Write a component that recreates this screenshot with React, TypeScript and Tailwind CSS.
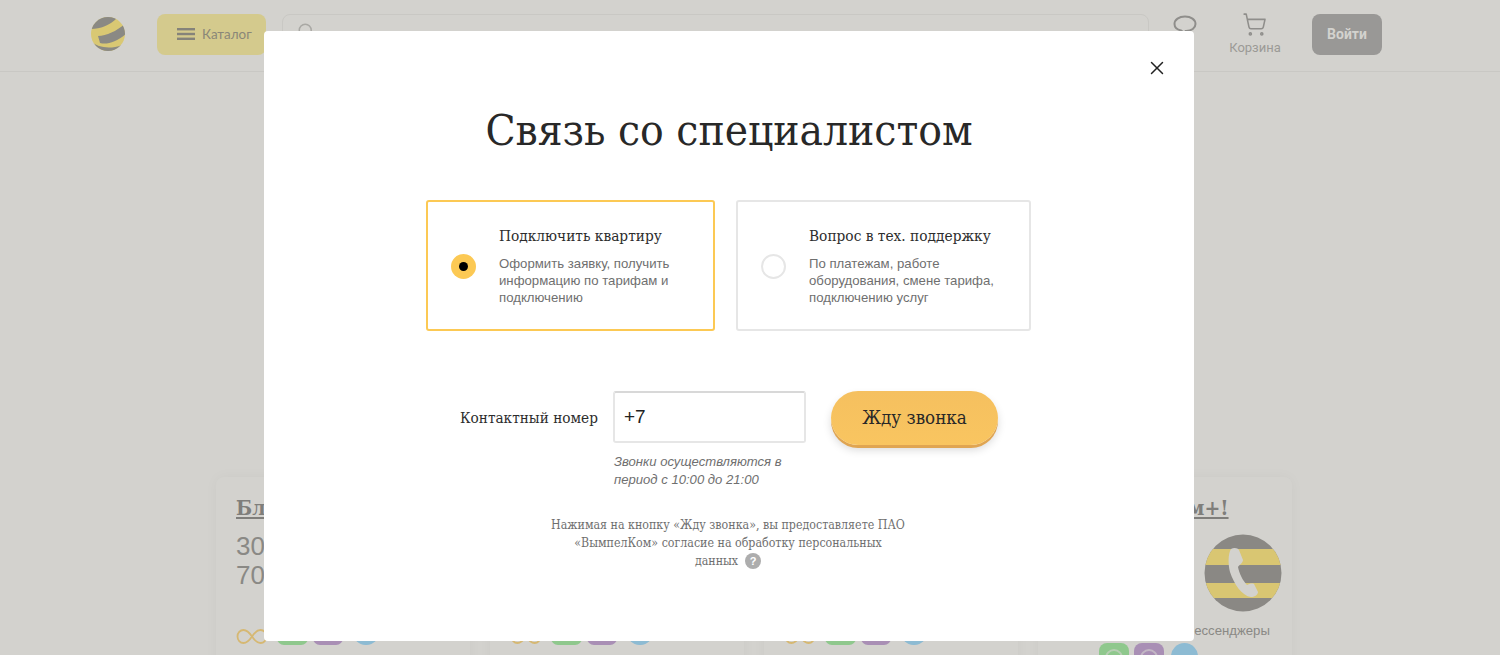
import React from "react";
import { Search, ShoppingCart, X } from "lucide-react";

const serif = "font-['DejaVu_Serif','Liberation_Serif',serif] [font-stretch:condensed]";
const sans = "font-['Liberation_Sans',Arial,sans-serif]";

const Ball = () => (
  <svg width="36" height="36" viewBox="0 0 36 36">
    <defs>
      <clipPath id="ball">
        <circle cx="18" cy="18" r="17" />
      </clipPath>
    </defs>
    <g clipPath="url(#ball)">
      <rect width="36" height="36" fill="#d9c873" />
      <path d="M0 13C10 13 19 10 27 2L14 -2L0 2Z" fill="#8a8984" />
      <path d="M8 20C17 20 27 15 36 7L37 17C28 25 18 29 10 27Z" fill="#8a8984" />
      <path d="M0 25C7 31 19 34 32 29L28 38L2 38Z" fill="#8a8984" />
    </g>
  </svg>
);

const PhoneBadge = () => (
  <svg width="78" height="78" viewBox="0 0 78 78">
    <defs>
      <clipPath id="badge">
        <circle cx="39" cy="39" r="38.5" />
      </clipPath>
    </defs>
    <g clipPath="url(#badge)">
      <rect width="78" height="78" fill="#8a8884" />
      <rect y="15" width="78" height="16" fill="#d9c672" />
      <rect y="49" width="78" height="15" fill="#d9c672" />
    </g>
    <path
      d="M27 15C30 13 34 14 35 16L39 26C39 29 35 31 34 33C35 39 39 47 43 51C45 50 48 49 50 50L54 58C54 61 50 63 47 63C38 62 30 50 26 38C24 30 24 20 27 15Z"
      fill="#d3d2ce"
    />
  </svg>
);

const Infinity = () => (
  <svg width="32" height="17" viewBox="0 0 32 17" className="shrink-0">
    <path
      d="M16 8.5C13 4 10.5 2 7.5 2C4 2 1.5 5 1.5 8.5C1.5 12 4 15 7.5 15C10.5 15 13 13 16 8.5C19 4 21.5 2 24.5 2C28 2 30.5 5 30.5 8.5C30.5 12 28 15 24.5 15C21.5 15 19 13 16 8.5Z"
      fill="none"
      stroke="#d6b872"
      strokeWidth="1.8"
    />
  </svg>
);

const Pills = () => (
  <div className="flex h-[17px] items-start">
    <Infinity />
    <div className="ml-[9px] h-[17px] w-[31px] rounded-b-[7px] bg-[#8fc88d]" />
    <div className="ml-[5px] h-[17px] w-[30px] rounded-b-[7px] bg-[#a98fb5]" />
    <div className="ml-[10px] h-[25px] w-[26px] -translate-y-[8px] rounded-full bg-[#8dbbd3]" />
  </div>
);

const Messenger = ({ color }: { color: string }) => (
  <div className={`flex h-[30px] w-[30px] items-center justify-center rounded-[8px] ${color}`}>
    <div className="h-[18px] w-[18px] rounded-full border-2 border-[#d3d2ce]/60" />
  </div>
);

const Option = ({
  active,
  title,
  lines,
  className,
}: {
  active?: boolean;
  title: string;
  lines: string[];
  className: string;
}) => (
  <div
    className={`flex h-[131px] items-center rounded-[3px] border-2 pl-[23px] ${
      active ? "border-[#fcc954]" : "border-[#e6e6e6]"
    } ${className}`}
  >
    {active ? (
      <div className="mt-[2px] flex h-[25px] w-[25px] items-center justify-center rounded-full bg-[#fcc954]">
        <div className="h-[9px] w-[9px] rounded-full bg-black" />
      </div>
    ) : (
      <div className="mt-[2px] h-[25px] w-[25px] rounded-full border-2 border-[#e6e6e6]" />
    )}
    <div className="ml-[23px]">
      <div className={`${serif} pt-[1px] text-[15.3px] leading-[20px] text-[#2c2c2c]`}>{title}</div>
      <div className={`${sans} mt-[9px] text-[13.2px] leading-[17px] text-[#6f6f6f]`}>
        {lines.map((l) => (
          <div key={l}>{l}</div>
        ))}
      </div>
    </div>
  </div>
);

const cardClass = "h-[200px] w-[254px] rounded-t-[8px] bg-[#d3d2ce] shadow-[0_0_14px_rgba(0,0,0,0.035)]";

const Background = () => (
  <div className="h-[655px] w-[1500px] overflow-hidden bg-[#d3d2ce]">
    <header className="flex h-[72px] items-start border-b border-[#c9c8c4] pl-[90px] pt-[14px]">
      <div className="mt-[2px]">
        <Ball />
      </div>
      <div className="ml-[31px] flex h-[41px] w-[109px] items-center rounded-[8px] bg-[#d4ca8d] pb-[1px] pl-[20px] font-['Lato',sans-serif] text-[13.4px] text-[#8a8778]">
        <svg width="18" height="12" viewBox="0 0 18 12" className="mr-[7px]">
          <rect width="18" height="2.4" fill="#85837a" />
          <rect y="4.8" width="18" height="2.4" fill="#85837a" />
          <rect y="9.6" width="18" height="2.4" fill="#85837a" />
        </svg>
        Каталог
      </div>
      <div className="ml-[16px] flex h-[33px] w-[867px] items-center rounded-[8px] border border-[#c9c8c4] pl-[14px]">
        <Search size={18} className="text-[#a9a8a4]" />
      </div>
      <svg width="24" height="24" viewBox="0 0 24 24" className="ml-[24px] mt-[1px]">
        <path
          d="M12 1.5C18 1.5 22.5 4.5 22.5 9C22.5 13 18.5 16 13 16L15 21L8 15.5C4 14.5 1.5 12 1.5 9C1.5 4.5 6 1.5 12 1.5Z"
          fill="none"
          stroke="#8f8e8b"
          strokeWidth="2"
        />
      </svg>
      <div className="ml-[28px] -mt-[2px] flex w-[60px] flex-col items-center font-['Roboto',sans-serif] text-[13px] text-[#9b9a96]">
        <ShoppingCart size={25} className="-translate-x-[1px] text-[#8f8e8b]" strokeWidth={1.5} />
        <span className="mt-[1px]">Корзина</span>
      </div>
      <div className="ml-[27px] flex h-[41px] w-[70px] items-center justify-center rounded-[8px] bg-[#999896] font-['Roboto',sans-serif] text-[14px] font-bold text-[#d3d2ce]">
        Войти
      </div>
    </header>

    <main className="mt-[405px] flex gap-[20px] pl-[216px]">
      <div className={`${cardClass} pl-[20px] pt-[17px]`}>
        <div className={`${serif} text-[21px] font-bold leading-[28px] text-[#7f7e7b] underline`}>Бл</div>
        <div className={`${sans} mt-[10px] text-[26px] leading-[29px] text-[#8a8985]`}>
          30
          <br />
          70
        </div>
        <div className="mt-[38px]">
          <Pills />
        </div>
      </div>
      <div className={`${cardClass} pl-[20px] pt-[151px]`}>
        <Pills />
      </div>
      <div className={`${cardClass} pl-[20px] pt-[151px]`}>
        <Pills />
      </div>
      <div className={`${cardClass} pl-[61px] pt-[17px]`}>
        <div className={`${serif} ml-[89px] text-[21px] font-bold leading-[28px] text-[#7f7e7b] underline`}>м+!</div>
        <div className="ml-[105px] mt-[12px] h-[78px]">
          <PhoneBadge />
        </div>
        <div className={`${sans} ml-[84px] mt-[11px] text-[13.2px] leading-[16px] text-[#8a8985]`}>Мессенджеры</div>
        <div className="mt-[4px] flex gap-[5px]">
          <Messenger color="bg-[#8fc88d]" />
          <Messenger color="bg-[#a98fb5]" />
          <div className="ml-[2px] h-[30px] w-[27px] rounded-full bg-[#8dbbd3]" />
        </div>
      </div>
    </main>
  </div>
);

export default function App() {
  return (
    <div className="relative h-[655px] w-[1500px] overflow-hidden">
      <Background />
      <div className="absolute left-[264px] top-[31px] h-[610px] w-[930px] rounded-[4px] bg-white">
        <X size={22} strokeWidth={1.6} className="absolute right-[26px] top-[26px] text-[#222]" />
        <h1 className={`${serif} pt-[70px] text-center text-[43.8px] font-normal leading-[58px] text-[#282828]`}>
          Связь со специалистом
        </h1>
        <div className="mt-[41px] flex pl-[162px]">
          <Option
            active
            className="w-[289px]"
            title="Подключить квартиру"
            lines={["Оформить заявку, получить", "информацию по тарифам и", "подключению"]}
          />
          <Option
            className="ml-[21px] w-[295px]"
            title="Вопрос в тех. поддержку"
            lines={["По платежам, работе", "оборудования, смене тарифа,", "подключению услуг"]}
          />
        </div>
        <div className="mt-[60px] flex items-start pl-[196px]">
          <label className={`${serif} w-[153px] pt-[16px] text-[15.2px] leading-[22px] text-[#2c2c2c]`}>Контактный номер</label>
          <div>
            <div className={`${sans} flex h-[52px] w-[193px] items-center rounded-[3px] border-2 border-[#e6e6e6] border-t-[#d8d8d8] pl-[9px] text-[19px] text-[#222]`}>
              +7
            </div>
            <p className={`${sans} ml-[1px] mt-[10px] text-[13.1px] italic leading-[18px] text-[#6f6f6f]`}>
              Звонки осуществляются в
              <br />
              период с 10:00 до 21:00
            </p>
          </div>
          <button className={`${serif} ml-[25px] h-[54px] w-[167px] rounded-[28px] bg-gradient-to-b from-[#f5c05f] to-[#f9c560] text-[18.6px] text-[#282828] shadow-[0_3px_0_#e0a552,0_5px_8px_rgba(0,0,0,0.15)]`}>
            Жду звонка
          </button>
        </div>
        <p className={`${serif} mt-[27px] -translate-x-[1px] text-center text-[12.3px] leading-[18px] text-[#6f6f6f]`}>
          Нажимая на кнопку «Жду звонка», вы предоставляете ПАО
          <br />
          «ВымпелКом» согласие на обработку персональных
          <br />
          данных
          <span className={`${sans} ml-[7px] inline-flex h-[16px] w-[16px] items-center justify-center rounded-full bg-[#adadad] text-[11px] font-bold text-white`}>?</span>
        </p>
      </div>
    </div>
  );
}
